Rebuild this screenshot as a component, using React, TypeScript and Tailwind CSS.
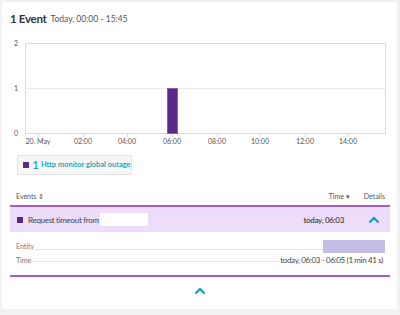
import React from "react";

const xLabels = [
  { t: "20. May", x: 36 },
  { t: "02:00", x: 81 },
  { t: "04:00", x: 125 },
  { t: "06:00", x: 170 },
  { t: "08:00", x: 215 },
  { t: "10:00", x: 258 },
  { t: "12:00", x: 303 },
  { t: "14:00", x: 346 },
];

function Chevron({ className }: { className?: string }) {
  return (
    <svg width="12" height="8" viewBox="0 0 12 8" className={className}>
      <path d="M1.5 6.5 L6 2 L10.5 6.5" fill="none" stroke="#00a1b2" strokeWidth="2" />
    </svg>
  );
}

function Chart() {
  return (
    <svg width="395" height="113" viewBox="0 0 395 113" className="block">
      <rect x="23.5" y="8.5" width="360" height="90" fill="#fff" stroke="#dcdcdc" />
      <line x1="24" y1="53.5" x2="383" y2="53.5" stroke="#ececec" />
      <g fill="#555" fontSize="7" fontFamily="Lato, sans-serif" textAnchor="middle">
        <text x="14" y="10.5">2</text>
        <text x="14" y="55.5">1</text>
        <text x="14" y="100.5">0</text>
        {xLabels.map((l) => (
          <g key={l.t}>
            <line x1={l.x + 0.5} y1="99" x2={l.x + 0.5} y2="102" stroke="#dcdcdc" />
            <text x={l.x} y="109">{l.t}</text>
          </g>
        ))}
      </g>
      <rect x="165.5" y="53.5" width="10" height="45" fill="#5b2a86" stroke="#8a5cb0" />
    </svg>
  );
}

export default function App() {
  return (
    <div className="w-[400px] h-[315px] bg-[#f2f2f2] pt-[2px] pl-[2px] font-['Lato',sans-serif] text-[#454646]">
      <div className="w-[395px] h-[307px] bg-white flex flex-col">
        {/* Header */}
        <div className="h-[33px] flex items-center pl-[8px] gap-[4px]">
          <span className="text-[11.5px] font-bold tracking-[-0.3px] text-[#353535]">1 Event</span>
          <span className="text-[8.5px] text-[#555] mt-[1px]">Today, 00:00 - 15:45</span>
        </div>

        <Chart />

        {/* Legend */}
        <div className="pt-[7px] pl-[15px]">
          <div className="w-[115px] h-[20px] bg-[#f7f7f7] border border-[#e2e2e2] rounded-[2px] flex items-center pl-[5px] gap-[2px] whitespace-nowrap">
            <span className="w-[6px] h-[6px] bg-[#5b2a86]" />
            <span className="text-[12px] leading-none text-[#00a1b2] ml-[1px]">1</span>
            <span className="text-[7.5px] text-[#00a1b2] font-semibold">Http monitor global outage</span>
          </div>
        </div>

        {/* Table */}
        <div className="ml-[8px] mr-[7px] flex flex-col">
          <div className="h-[30px] flex items-end pb-[4px] text-[7px] text-[#555]">
            <span className="pl-[6px]">Events ⇕</span>
            <span className="ml-auto">Time ▾</span>
            <span className="ml-[14px] mr-[5px]">Details</span>
          </div>
          <div className="h-[2px] bg-[#a45cc8]" />
          <div className="h-[25px] bg-[#eddcfa] flex items-center pl-[7px] pr-[10px] text-[8px] tracking-[-0.3px]">
            <span className="w-[6px] h-[6px] bg-[#5b2a86]" />
            <span className="ml-[5px]">Request timeout from</span>
            <span className="ml-[1px] w-[48px] h-[13px] bg-white" />
            <span className="ml-auto font-semibold">today, 06:03</span>
            <Chevron className="ml-[24px]" />
          </div>

          {/* Details */}
          <div className="pt-[7px] pb-[8px] pl-[6px] pr-[5px] flex flex-col text-[7px]">
            <div className="h-[14px] flex items-center">
              <span className="text-[#777]">Entity</span>
              <span className="flex-1 self-end mb-[3px] border-b border-[#e4e4e4]" />
              <span className="w-[62px] h-[13px] bg-[#c6bde6]" />
            </div>
            <div className="h-[14px] flex items-center">
              <span className="text-[#777]">Time</span>
              <span className="flex-1 self-end mb-[5px] border-b border-[#e4e4e4]" />
              <span className="text-[8px] tracking-[-0.35px] text-[#454646] mr-[2px]">today, 06:03 - 06:05 (1 min 41 s)</span>
            </div>
          </div>
          <div className="h-[2px] bg-[#a45cc8]" />
          <div className="flex justify-center pt-[10px]">
            <Chevron />
          </div>
        </div>
      </div>
    </div>
  );
}
